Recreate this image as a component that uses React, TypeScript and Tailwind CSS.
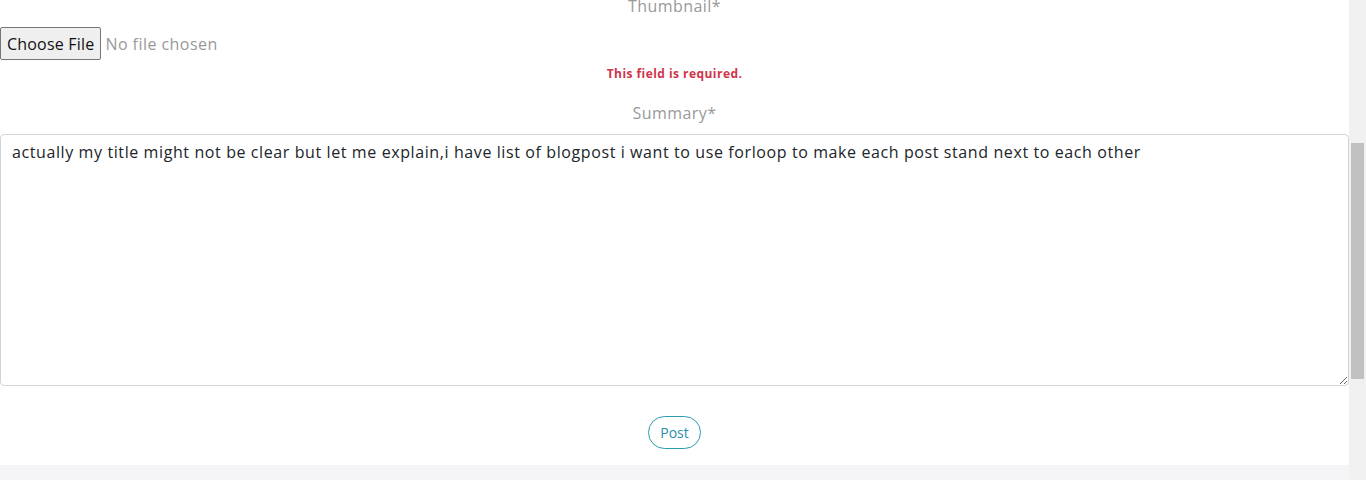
import React from 'react';

const font = { fontFamily: '"Open Sans", "DejaVu Sans", sans-serif' };

const Scrollbar = () => (
  <div className="w-[17px] shrink-0 bg-[#f1f1f1] flex flex-col items-center">
    <div className="mt-[143px] h-[236px] w-[13px] bg-[#c1c1c1]" />
  </div>
);

const App = () => {
  return (
    <div className="flex h-[480px] w-[1366px] overflow-hidden bg-white">
      <div className="flex-1 flex flex-col tracking-[0.45px]" style={font}>
        <div className="bg-white flex flex-col">
          <label className="-mt-[6px] text-center text-[16px] leading-[24px] text-[#999999]">
            Thumbnail*
          </label>
          <div className="mt-[9px] flex items-center">
            <button
              type="button"
              className="h-[33px] px-[6px] rounded-[2px] border border-[#767676] bg-[#efefef] text-[16px] text-[#111] tracking-[0.2px]"
            >
              Choose File
            </button>
            <span className="ml-[4px] text-[16px] text-[#999999]">No file chosen</span>
          </div>
          <p className="mt-[7px] text-center text-[12px] leading-[14px] font-bold text-[#d0344a]">
            This field is required.
          </p>
          <label className="mt-[20px] text-center text-[16px] leading-[24px] text-[#999999]">
            Summary*
          </label>
          <textarea
            className="mt-[9px] h-[252px] w-full rounded-[4px] border border-[#ced4da] px-[11px] py-[5px] text-[16px] leading-[24px] text-[#212529] outline-none tracking-[0.6px]"
            style={font}
            defaultValue="actually my title might not be clear but let me explain,i have list of blogpost i want to use forloop to make each post stand next to each other"
          />
          <div className="mt-[30px] mb-[16px] flex justify-center">
            <button
              type="button"
              className="h-[33px] px-[11px] rounded-full border border-[#2a9cb0] text-[14px] text-[#2a8fa8] bg-white tracking-normal"
            >
              Post
            </button>
          </div>
        </div>
        <div className="flex-1 bg-[#f5f5f8]" />
      </div>
      <Scrollbar />
    </div>
  );
};

export default App;
